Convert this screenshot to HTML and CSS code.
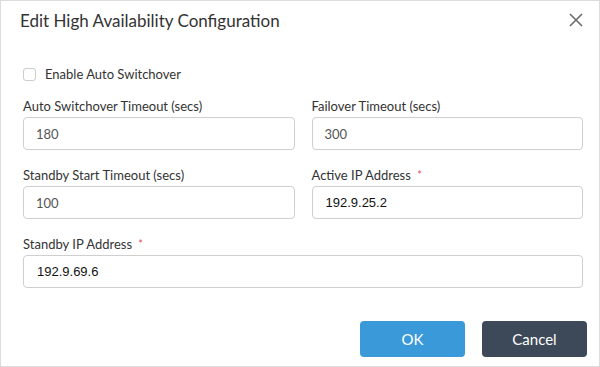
FILE: index.html
```html
<!DOCTYPE html>
<html lang="en">
<head>
    <meta charset="UTF-8">
    <title>Edit High Availability Configuration</title>
    <link rel="stylesheet" href="styles.css">
</head>
<body>
    <div class="dialog">
        <div class="dialog-header">
            <h2>Edit High Availability Configuration</h2>
            <span class="close-btn">
                <svg width="14" height="14" viewBox="0 0 14 14">
                    <path d="M1 1 L13 13 M13 1 L1 13" stroke="#6b6b6b" stroke-width="1.6" fill="none"/>
                </svg>
            </span>
        </div>

        <div class="dialog-body">
            <label class="check-row">
                <span class="check-box"></span>
                Enable Auto Switchover
            </label>

            <div class="form-grid">
                <div class="form-group">
                    <div class="field-label">Auto Switchover Timeout (secs)</div>
                    <div class="field-input">180</div>
                </div>
                <div class="form-group">
                    <div class="field-label">Failover Timeout (secs)</div>
                    <div class="field-input">300</div>
                </div>
                <div class="form-group">
                    <div class="field-label">Standby Start Timeout (secs)</div>
                    <div class="field-input">100</div>
                </div>
                <div class="form-group">
                    <div class="field-label">Active IP Address <span class="required">*</span></div>
                    <div class="field-input ip">192.9.25.2</div>
                </div>
                <div class="form-group full">
                    <div class="field-label">Standby IP Address <span class="required">*</span></div>
                    <div class="field-input ip">192.9.69.6</div>
                </div>
            </div>
        </div>

        <div class="dialog-footer">
            <button class="btn btn-ok">OK</button>
            <button class="btn btn-cancel">Cancel</button>
        </div>
    </div>
</body>
</html>
```

FILE: styles.css
```css
* {
    margin: 0;
    padding: 0;
    box-sizing: border-box;
}

body {
    font-family: Lato, "Open Sans", sans-serif;
    background-color: #ffffff;
    color: #333333;
}

.dialog {
    width: 600px;
    height: 367px;
    border: 1px solid #dcdcdc;
    background-color: #ffffff;
}

.dialog-header {
    display: flex;
    justify-content: space-between;
    align-items: flex-start;
    padding: 9px 16px 0 19px;
}

.dialog-header h2 {
    font-size: 17px;
    font-weight: 400;
    line-height: 22px;
    color: #333333;
}

.close-btn {
    display: block;
    width: 14px;
    height: 14px;
    margin-top: 3px;
}

.close-btn svg {
    display: block;
}

.dialog-body {
    padding: 0 16px 0 22px;
}

.check-row {
    display: flex;
    align-items: center;
    height: 16px;
    margin-top: 34px;
    font-size: 13px;
    line-height: 16px;
    color: #333333;
}

.check-box {
    width: 13px;
    height: 13px;
    border: 1px solid #cccccc;
    border-radius: 3px;
    margin-right: 9px;
}

.form-grid {
    display: grid;
    grid-template-columns: 1fr 1fr;
    column-gap: 17px;
    row-gap: 17px;
    margin-top: 16px;
}

.form-group.full {
    grid-column: 1 / 3;
}

.field-label {
    font-size: 13px;
    line-height: 16px;
    color: #333333;
    margin-bottom: 3px;
}

.required {
    color: #e8505b;
    font-size: 11px;
    vertical-align: top;
    margin-left: 3px;
}

.field-input {
    height: 33px;
    border: 1px solid #cfcfcf;
    border-radius: 4px;
    padding: 0 12px;
    display: flex;
    align-items: center;
    font-size: 13px;
    color: #555555;
}

.field-input.ip {
    font-family: "Liberation Sans", Arial, sans-serif;
    color: #111111;
    padding-left: 13px;
}

.dialog-footer {
    display: flex;
    justify-content: flex-end;
    gap: 17px;
    padding: 33px 12px 0 0;
}

.btn {
    width: 105px;
    height: 36px;
    border: none;
    border-radius: 4px;
    font-family: Lato, "Open Sans", sans-serif;
    font-size: 15px;
    color: #ffffff;
    cursor: pointer;
}

.btn-ok {
    background-color: #3a99d9;
}

.btn-cancel {
    background-color: #3d4859;
}
```
